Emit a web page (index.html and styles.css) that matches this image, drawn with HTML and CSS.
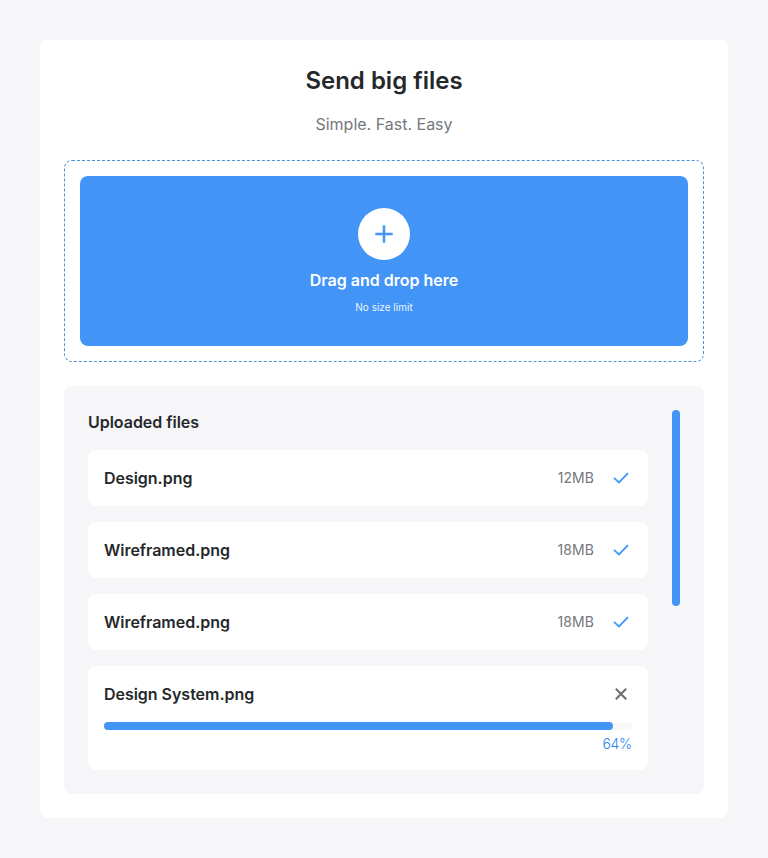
FILE: index.html
```html
<!DOCTYPE html>
<html lang="en">
<head>
<meta charset="utf-8">
<title>Send big files</title>
<link rel="stylesheet" href="styles.css">
</head>
<body>
<main class="card">
  <h1>Send big files</h1>
  <p class="subtitle">Simple. Fast. Easy</p>
  <section class="drop-outline">
    <div class="drop-zone">
      <span class="plus"><svg width="52" height="52" viewBox="0 0 52 52"><path d="M26 17.300v17.400M17.300 26h17.400"/></svg></span>
      <strong>Drag and drop here</strong>
      <small>No size limit</small>
    </div>
  </section>
  <section class="uploads">
    <div class="list">
      <h2>Uploaded files</h2>
      <article class="file"><span class="name">Design.png</span><span class="size">12MB</span><svg class="check" width="22" height="24" viewBox="0 0 22 24"><path d="M4 11.900l5 4.600L18 7.200"/></svg></article>
      <article class="file"><span class="name">Wireframed.png</span><span class="size">18MB</span><svg class="check" width="22" height="24" viewBox="0 0 22 24"><path d="M4 11.900l5 4.600L18 7.200"/></svg></article>
      <article class="file"><span class="name">Wireframed.png</span><span class="size">18MB</span><svg class="check" width="22" height="24" viewBox="0 0 22 24"><path d="M4 11.900l5 4.600L18 7.200"/></svg></article>
      <article class="file loading">
        <div class="row"><span class="name">Design System.png</span><svg class="close" width="22" height="24" viewBox="0 0 22 24"><path d="M5.800 6.800l10.400 10.400M16.200 6.800L5.800 17.200"/></svg></div>
        <div class="track"><div class="bar"></div></div>
        <span class="percent">64%</span>
      </article>
    </div>
    <div class="scroll"><div class="thumb"></div></div>
  </section>
</main>
</body>
</html>
```
FILE: styles.css
```css
* { box-sizing: border-box; }
body { margin: 0; padding: 40px; background: #f6f6f8; font-family: Inter, sans-serif; color: #25282b; }
.card { height: 778px; padding: 24px; background: #fff; border-radius: 8px; }
h1 { margin: 0; font-size: 24px; line-height: 33px; font-weight: 600; text-align: center; }
.subtitle { margin: 15px 0 24px; font-size: 16px; line-height: 24px; text-align: center; color: #75777d; }
.drop-outline { height: 202px; padding: 15px; border: 1px dashed #4b92d8; border-radius: 8px; }
.drop-zone { height: 170px; padding-top: 32px; background: #4294f7; border-radius: 8px; display: flex; flex-direction: column; align-items: center; color: #fff; }
.plus { width: 52px; height: 52px; border-radius: 50%; background: #fff; }
svg { display: block; fill: none; stroke: #4294f7; stroke-width: 2; flex: none; }
.plus svg { stroke-width: 2.5; }
strong { margin-top: 8px; font-size: 16px; line-height: 24px; font-weight: 600; }
small { margin-top: 7px; font-size: 10px; line-height: 16px; color: #edf5ff; }
.uploads { margin-top: 24px; height: 408px; padding: 24px; border-radius: 8px; background: #f6f6f8; display: flex; gap: 24px; }
.list { flex: 1; }
h2 { margin: 0 0 15px; font-size: 16px; line-height: 25px; font-weight: 600; letter-spacing: -.03px; }
.file { height: 56px; padding: 0 16px; margin-bottom: 16px; background: #fff; border-radius: 8px; display: flex; align-items: center; }
.name { flex: 1; font-size: 16px; line-height: 24px; font-weight: 600; letter-spacing: -.03px; }
.size { font-size: 14px; line-height: 20px; letter-spacing: .08px; color: #75777d; margin-right: 16px; }
.check { stroke-width: 1.8; }
.loading { display: block; height: 104px; padding-top: 16px; margin: 0; }
.row { display: flex; }
.close { stroke: #6e6e70; }
.track { margin-top: 16px; height: 8px; border-radius: 4px; background: #f8f8f9; }
.bar { width: 509px; height: 8px; border-radius: 4px; background: #4294f7; }
.percent { display: block; margin-top: 4px; text-align: right; font-size: 14px; line-height: 20px; font-weight: 300; letter-spacing: -.25px; color: #2d85f0; }
.scroll { width: 8px; border-radius: 4px; background: #f7f7f9; }
.thumb { height: 196px; border-radius: 4px; background: #4294f7; }
```
